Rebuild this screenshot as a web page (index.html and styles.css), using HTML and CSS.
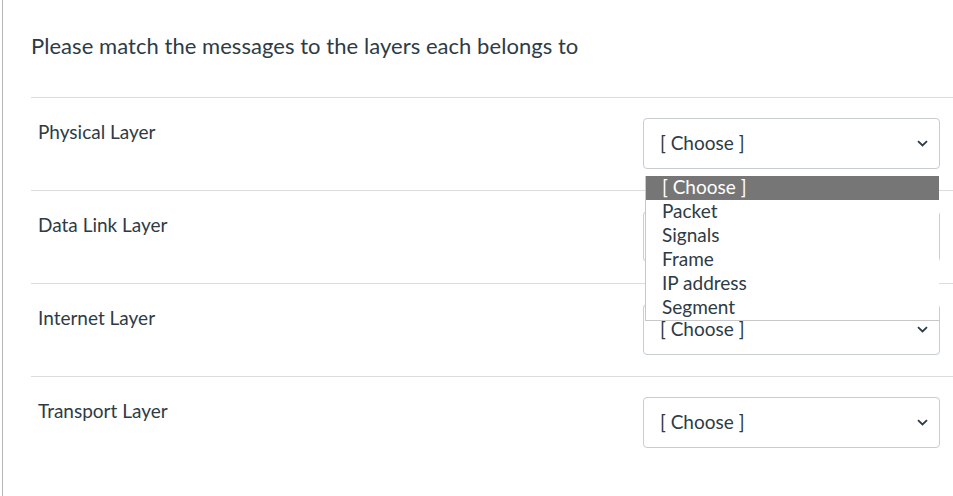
FILE: index.html
```html
<!DOCTYPE html>
<html>
<head>
<meta charset="utf-8">
<link rel="stylesheet" href="styles.css">
</head>
<body>
<div class="page">
  <div class="question">
    <p class="title">Please match the messages to the layers each belongs to</p>
    <div class="rows">
      <div class="row">
        <div class="label">Physical Layer</div>
        <div class="select-wrap">
          <div class="select"><span>[ Choose ]</span>
            <svg class="chev" width="11" height="7" viewBox="0 0 11 7"><path d="M1 1.2 L5.5 5.5 L10 1.2" fill="none" stroke="#2d3b45" stroke-width="1.8"/></svg>
          </div>
          <ul class="menu">
            <li class="active">[ Choose ]</li>
            <li>Packet</li>
            <li>Signals</li>
            <li>Frame</li>
            <li>IP address</li>
            <li>Segment</li>
          </ul>
        </div>
      </div>
      <div class="row">
        <div class="label">Data Link Layer</div>
        <div class="select-wrap">
          <div class="select"><span>[ Choose ]</span>
            <svg class="chev" width="11" height="7" viewBox="0 0 11 7"><path d="M1 1.2 L5.5 5.5 L10 1.2" fill="none" stroke="#2d3b45" stroke-width="1.8"/></svg>
          </div>
        </div>
      </div>
      <div class="row">
        <div class="label">Internet Layer</div>
        <div class="select-wrap">
          <div class="select"><span>[ Choose ]</span>
            <svg class="chev" width="11" height="7" viewBox="0 0 11 7"><path d="M1 1.2 L5.5 5.5 L10 1.2" fill="none" stroke="#2d3b45" stroke-width="1.8"/></svg>
          </div>
        </div>
      </div>
      <div class="row last">
        <div class="label">Transport Layer</div>
        <div class="select-wrap">
          <div class="select"><span>[ Choose ]</span>
            <svg class="chev" width="11" height="7" viewBox="0 0 11 7"><path d="M1 1.2 L5.5 5.5 L10 1.2" fill="none" stroke="#2d3b45" stroke-width="1.8"/></svg>
          </div>
        </div>
      </div>
    </div>
  </div>
</div>
</body>
</html>
```

FILE: styles.css
```css
html, body {
  margin: 0;
  padding: 0;
  background: #fff;
}
body {
  font-family: Lato, "Noto Sans", sans-serif;
  color: #2d3b45;
  height: 496px;
  overflow: hidden;
}
.page {
  margin-left: 2px;
  border-left: 1px solid #b5b5b5;
  height: 496px;
  padding-left: 28px;
}
.question {
  padding-top: 32px;
}
.title {
  margin: 0;
  font-size: 22px;
  line-height: 28px;
  height: 65px;
  letter-spacing: 0.05px;
}
.rows {
  border-top: 1px solid #dcdcdc;
}
.row {
  display: flex;
  justify-content: space-between;
  align-items: flex-start;
  height: 92px;
  border-bottom: 1px solid #dcdcdc;
  padding: 0 13px 0 7px;
}
.row.last {
  border-bottom: none;
}
.label {
  font-size: 19px;
  line-height: 24px;
  padding-top: 22px;
}
.select-wrap {
  position: relative;
  margin-top: 20px;
}
.select {
  box-sizing: border-box;
  width: 297px;
  height: 51px;
  border: 1px solid #c7cdd1;
  border-radius: 4px;
  background: #fff;
  display: flex;
  align-items: center;
  justify-content: space-between;
  padding: 0 11px 2px 16px;
  font-size: 19px;
}
.chev {
  display: block;
  margin-top: 2px;
}
.menu {
  position: absolute;
  left: 2px;
  top: 58px;
  width: 294px;
  margin: 0;
  padding: 0;
  list-style: none;
  background: #fff;
  border-left: 1px solid #c8c8c8;
  border-bottom: 1px solid #c8c8c8;
  z-index: 5;
  box-sizing: border-box;
}
.menu li {
  height: 24px;
  line-height: 22px;
  font-size: 19px;
  padding-left: 16px;
  color: #2d3b45;
}
.menu li.active {
  background: #767676;
  color: #fff;
}
```
